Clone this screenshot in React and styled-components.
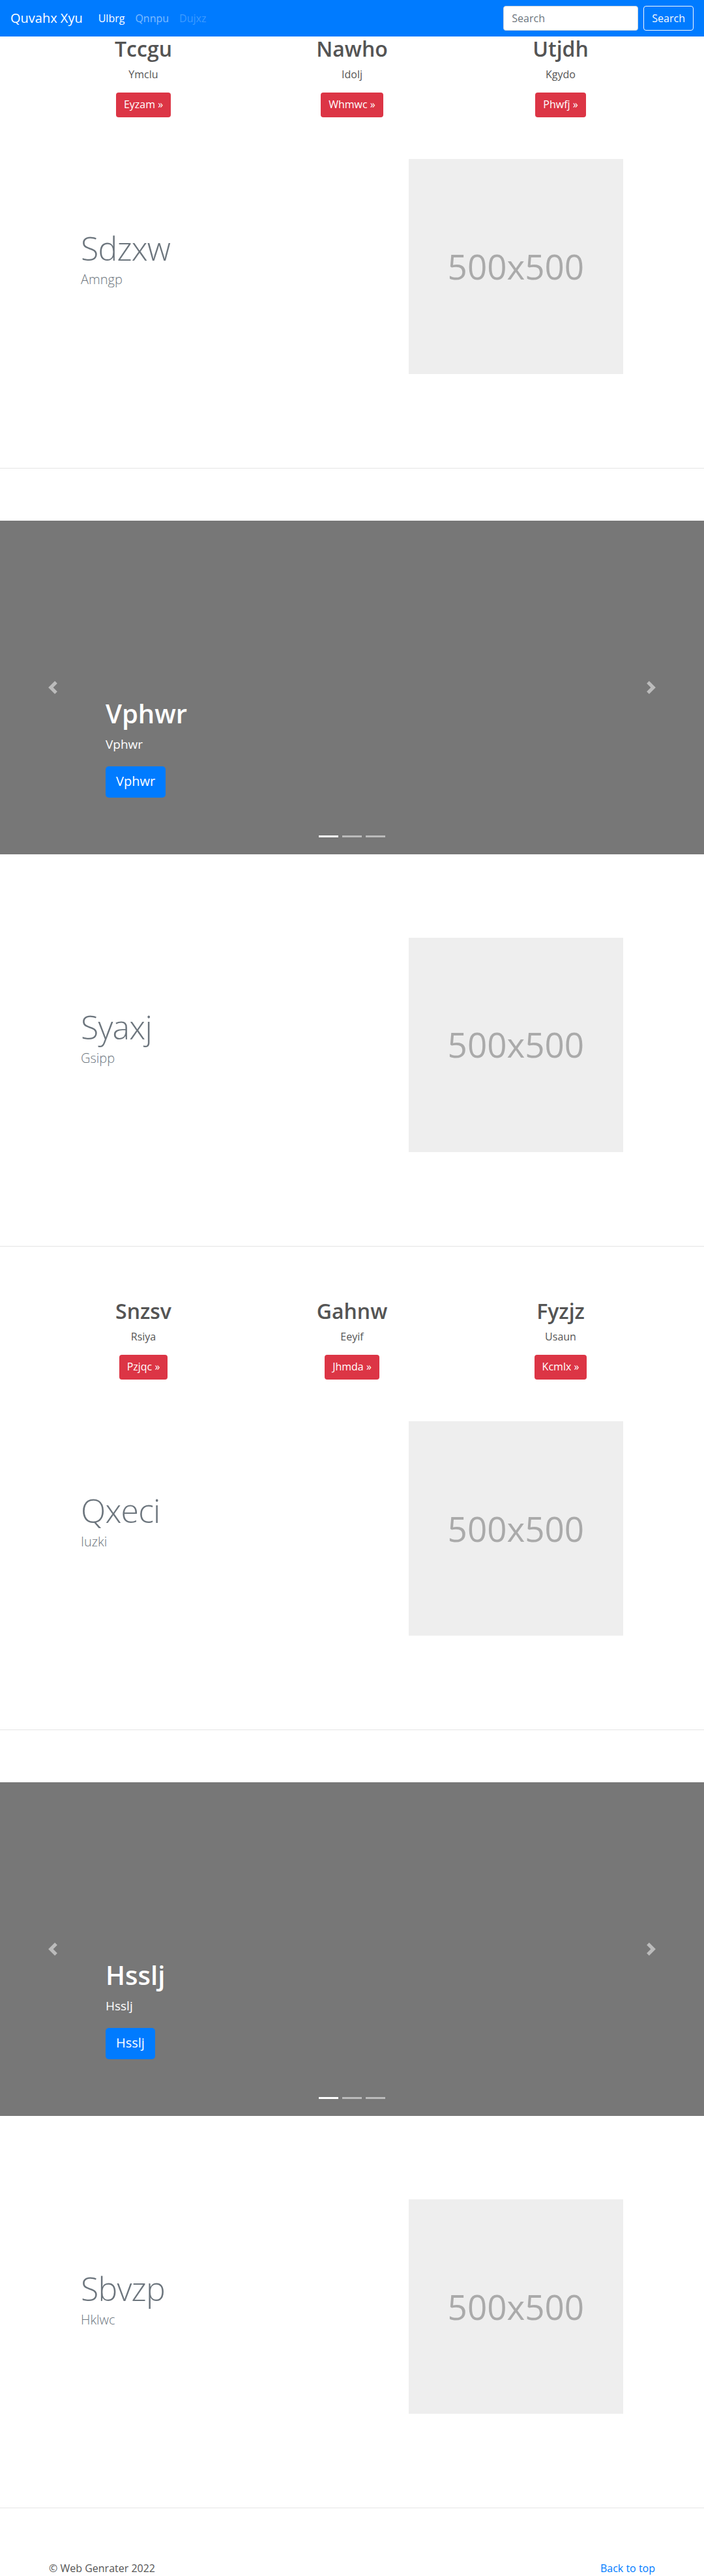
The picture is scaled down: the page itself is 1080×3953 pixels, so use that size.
import React from 'react';
import styled, { createGlobalStyle } from 'styled-components';

const GlobalStyle = createGlobalStyle`
  *, *::before, *::after { box-sizing: border-box; }
  body {
    margin: 0;
    font-family: "Open Sans", "Noto Sans", sans-serif;
    font-size: 16px;
    line-height: 1.5;
    color: #212529;
    background: #fff;
  }
`;

const Navbar = styled.nav`
  height: 56px;
  background: #007bff;
  display: flex;
  align-items: center;
  padding: 0 16px;
`;

const Brand = styled.a`
  font-size: 20px;
  line-height: 30px;
  color: #fff;
  margin-right: 16px;
  text-decoration: none;
`;

const NavLinks = styled.ul`
  display: flex;
  list-style: none;
  margin: 0;
  padding: 0;
  flex: 1;
`;

const NavLink = styled.a`
  display: block;
  padding: 8px;
  text-decoration: none;
  color: ${p => (p.$state === 'active' ? '#fff' : p.$state === 'disabled' ? 'rgba(255,255,255,.25)' : 'rgba(255,255,255,.5)')};
`;

const SearchForm = styled.form`
  display: flex;
  align-items: center;
  gap: 8px;
`;

const SearchInput = styled.input`
  width: 207px;
  height: 38px;
  padding: 6px 12px;
  font: inherit;
  font-size: 16px;
  border: 1px solid #ced4da;
  border-radius: 4px;
  background: #fff;
  &::placeholder { color: #6c757d; }
`;

const OutlineButton = styled.button`
  height: 38px;
  padding: 6px 12px;
  font: inherit;
  font-size: 16px;
  color: #f8f9fa;
  background: transparent;
  border: 1px solid #f8f9fa;
  border-radius: 4px;
`;

const MarketingRow = styled.div`
  width: 960px;
  margin: 0 auto;
  display: grid;
  grid-template-columns: repeat(3, 1fr);
  text-align: center;
`;

const MarketingCol = styled.div`
  display: flex;
  flex-direction: column;
  align-items: center;
`;

const ColTitle = styled.h2`
  margin: 0 0 8px;
  font-size: 32px;
  line-height: 1.2;
  font-weight: 600;
  color: #545454;
`;

const ColText = styled.p`
  margin: 0 0 16px;
  color: #555;
`;

const DangerButton = styled.a`
  display: inline-block;
  height: 38px;
  padding: 6px 12px;
  border-radius: 4px;
  background: #dc3545;
  color: #fff;
  font-size: 16px;
  line-height: 24px;
  text-decoration: none;
`;

const Featurette = styled.section`
  padding: 64px 0;
`;

const FeaturetteRow = styled.div`
  width: 862px;
  margin: 0 auto;
  display: flex;
  align-items: flex-start;
`;

const TextCol = styled.div`
  flex: 0 0 58.3333%;
  padding: 0 15px;
`;

const ImageCol = styled.div`
  flex: 0 0 41.6667%;
  padding: 0 15px;
`;

const FeatHeading = styled.h2`
  margin: 112px 0 8px;
  font-size: 50px;
  line-height: 1;
  font-weight: 300;
  letter-spacing: -0.8px;
  color: #6c757d;
`;

const Lead = styled.p`
  margin: 0 0 16px;
  font-size: 20px;
  font-weight: 300;
  color: #6c757d;
`;

const Placeholder = styled.div`
  width: 100%;
  aspect-ratio: 1 / 1;
  background: #eee;
  color: #aaa;
  font-size: 53px;
  display: flex;
  align-items: center;
  justify-content: center;
`;

const Divider = styled.hr`
  margin: 80px 0;
  border: 0;
  border-top: 1px solid rgba(0, 0, 0, 0.1);
`;

const Carousel = styled.div`
  position: relative;
  height: 512px;
  background: #777;
  margin-bottom: 64px;
`;

const Caption = styled.div`
  position: absolute;
  left: 15%;
  right: 15%;
  bottom: 48px;
  padding: 20px 0;
  color: #fff;
  z-index: 10;
`;

const CaptionTitle = styled.h1`
  margin: 0 0 8px;
  font-size: 40px;
  line-height: 1.2;
  font-weight: 600;
`;

const CaptionText = styled.p`
  margin: 0 0 19px;
  font-size: 19px;
  line-height: 30px;
`;

const CaptionAction = styled.div`
  display: flex;
  margin-bottom: 19px;
`;

const PrimaryLarge = styled.a`
  height: 48px;
  padding: 8px 16px;
  border-radius: 5px;
  background: #007bff;
  color: #fff;
  font-size: 20px;
  line-height: 30px;
  font-weight: 500;
  text-decoration: none;
`;

const Control = styled.a`
  position: absolute;
  top: 0;
  bottom: 0;
  ${p => (p.$side === 'left' ? 'left: 0;' : 'right: 0;')}
  width: 15%;
  display: flex;
  align-items: center;
  justify-content: center;
  opacity: 0.5;
`;

const Indicators = styled.ol`
  position: absolute;
  left: 0;
  right: 0;
  bottom: 0;
  margin: 0 0 16px;
  padding: 0;
  list-style: none;
  display: flex;
  justify-content: center;
`;

const Indicator = styled.li`
  width: 30px;
  height: 3px;
  margin: 0 3px;
  box-sizing: content-box;
  border-top: 10px solid transparent;
  border-bottom: 10px solid transparent;
  background: #fff;
  background-clip: padding-box;
  opacity: ${p => (p.$active ? 1 : 0.5)};
`;

const Footer = styled.footer`
  padding: 0 75px;
  display: flex;
  justify-content: space-between;
  color: #555;
  p { margin: 0; }
  a { color: #007bff; text-decoration: none; }
`;

const Chevron = ({ dir }) => (
  <svg width="20" height="20" viewBox="0 0 8 8" fill="#fff">
    {dir === 'left'
      ? <path d="M5.25 0l-4 4 4 4 1.5-1.5L4.25 4l2.5-2.5L5.25 0z" />
      : <path d="M2.75 0l-1.5 1.5L3.75 4l-2.5 2.5L2.75 8l4-4-4-4z" />}
  </svg>
);

const Marketing = ({ cols }) => (
  <MarketingRow>
    {cols.map(c => (
      <MarketingCol key={c.title}>
        <ColTitle>{c.title}</ColTitle>
        <ColText>{c.text}</ColText>
        <DangerButton href="#">{c.button} »</DangerButton>
      </MarketingCol>
    ))}
  </MarketingRow>
);

const FeatureBlock = ({ title, lead }) => (
  <Featurette>
    <FeaturetteRow>
      <TextCol>
        <FeatHeading>{title}</FeatHeading>
        <Lead>{lead}</Lead>
      </TextCol>
      <ImageCol>
        <Placeholder>500x500</Placeholder>
      </ImageCol>
    </FeaturetteRow>
  </Featurette>
);

const Slide = ({ title }) => (
  <Carousel>
    <Caption>
      <CaptionTitle>{title}</CaptionTitle>
      <CaptionText>{title}</CaptionText>
      <CaptionAction>
        <PrimaryLarge href="#">{title}</PrimaryLarge>
      </CaptionAction>
    </Caption>
    <Control $side="left" href="#"><Chevron dir="left" /></Control>
    <Control $side="right" href="#"><Chevron dir="right" /></Control>
    <Indicators>
      <Indicator $active />
      <Indicator />
      <Indicator />
    </Indicators>
  </Carousel>
);

const firstCols = [
  { title: 'Tccgu', text: 'Ymclu', button: 'Eyzam' },
  { title: 'Nawho', text: 'Idolj', button: 'Whmwc' },
  { title: 'Utjdh', text: 'Kgydo', button: 'Phwfj' },
];

const secondCols = [
  { title: 'Snzsv', text: 'Rsiya', button: 'Pzjqc' },
  { title: 'Gahnw', text: 'Eeyif', button: 'Jhmda' },
  { title: 'Fyzjz', text: 'Usaun', button: 'Kcmlx' },
];

export default function App() {
  return (
    <>
      <GlobalStyle />
      <Navbar>
        <Brand href="#">Quvahx Xyu</Brand>
        <NavLinks>
          <li><NavLink $state="active" href="#">Ulbrg</NavLink></li>
          <li><NavLink href="#">Qnnpu</NavLink></li>
          <li><NavLink $state="disabled" href="#">Dujxz</NavLink></li>
        </NavLinks>
        <SearchForm onSubmit={e => e.preventDefault()}>
          <SearchInput placeholder="Search" />
          <OutlineButton type="submit">Search</OutlineButton>
        </SearchForm>
      </Navbar>

      <Marketing cols={firstCols} />
      <FeatureBlock title="Sdzxw" lead="Amngp" />
      <Divider />
      <Slide title="Vphwr" />
      <FeatureBlock title="Syaxj" lead="Gsipp" />
      <Divider />
      <Marketing cols={secondCols} />
      <FeatureBlock title="Qxeci" lead="Iuzki" />
      <Divider />
      <Slide title="Hsslj" />
      <FeatureBlock title="Sbvzp" lead="Hklwc" />
      <Divider />

      <Footer>
        <p>© Web Genrater 2022</p>
        <p><a href="#">Back to top</a></p>
      </Footer>
    </>
  );
}
